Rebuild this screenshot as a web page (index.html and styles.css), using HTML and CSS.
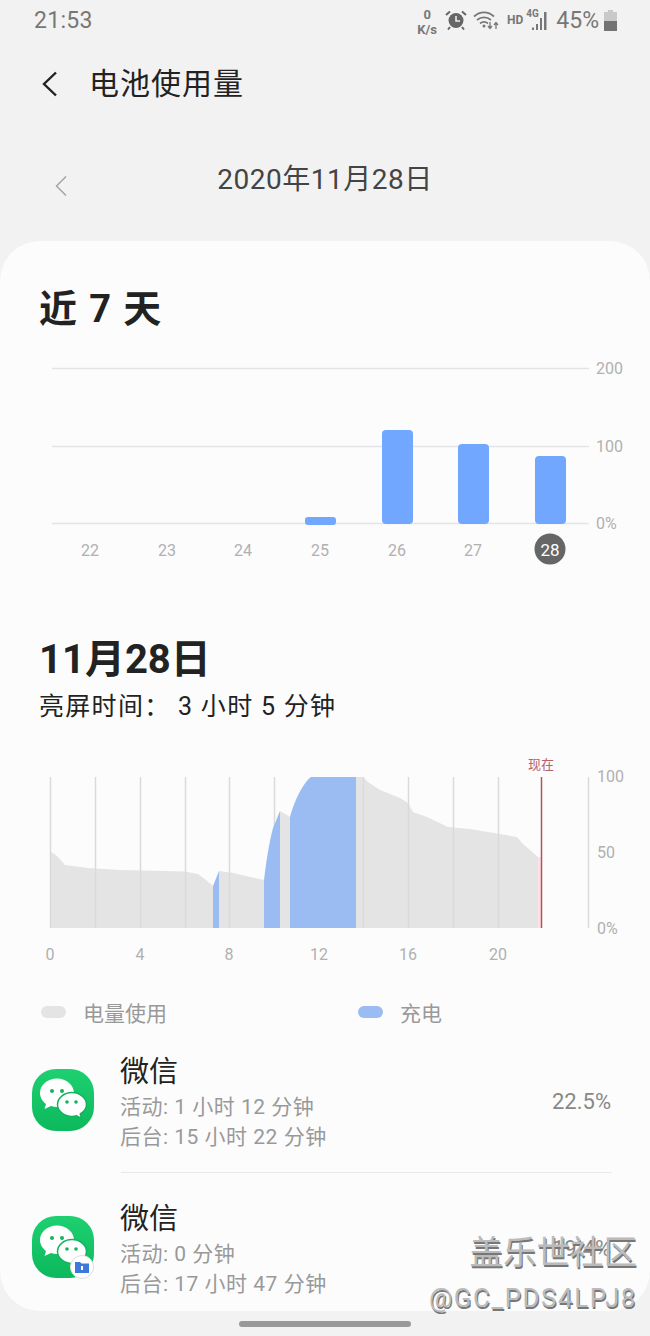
FILE: index.html
```html
<!DOCTYPE html>
<html lang="zh">
<head>
  <meta charset="UTF-8">
  <meta name="viewport" content="width=device-width, initial-scale=1.0">
  <title>电池使用量</title>
  <link rel="stylesheet" href="styles.css">
</head>
<body>
  <div class="phone">
    <!-- Status bar -->
    <div class="status-bar">
      <span class="clock">21:53</span>
      <div class="status-icons">
        <span class="speed"><b>0</b><b>K/s</b></span>
        <svg class="ic-alarm" width="24" height="20" viewBox="0 0 24 20">
          <circle cx="12" cy="10.5" r="7.5" fill="#666"/>
          <path d="M12 6v5h4" fill="none" stroke="#eee" stroke-width="1.6"/>
          <path d="M2 5l4-3.5M22 5l-4-3.5M6 17l-2 2.5M18 17l2 2.5" stroke="#666" stroke-width="2" fill="none"/>
        </svg>
        <svg class="ic-wifi" width="26" height="20" viewBox="0 0 26 20">
          <path d="M1 6.500c6-5.500 14-5.500 20 0M4 10c4-3.500 10-3.500 14 0M7 13.500c2.500-2 5.500-2 8 0" fill="none" stroke="#777" stroke-width="1.700"/>
          <circle cx="11" cy="16" r="1.500" fill="#777"/>
          <path d="M17 12v6M15 16l2 2.500 2-2.500M23 19v-6M21 15l2-2.500 2 2.500" fill="none" stroke="#777" stroke-width="1.300"/>
        </svg>
        <span class="hd">HD</span>
        <span class="net">
          <span class="net-label">4G</span>
          <svg width="18" height="22" viewBox="0 0 18 22">
            <path d="M3 18.500h2V21H3zM7 15h2v6H7zM11 9h2v12h-2zM15 3h2.500v18H15z" fill="#777"/>
          </svg>
        </span>
        <span class="battery-text">45%</span>
        <svg width="13" height="21" viewBox="0 0 13 21">
          <path d="M4 0h5v2h4v19H0V2h4z" fill="#c9c9c9"/>
          <path d="M0 11h13v10H0z" fill="#737373"/>
        </svg>
      </div>
    </div>

    <!-- Header -->
    <header class="app-bar">
      <svg class="back" width="18" height="26" viewBox="0 0 18 26">
        <path d="M15 1.500L3 13l12 11.500" fill="none" stroke="#222" stroke-width="2.400"/>
      </svg>
      <h1>电池使用量</h1>
    </header>

    <div class="date-bar">
      <svg class="prev" width="14" height="22" viewBox="0 0 14 22">
        <path d="M12 1.500L2.500 11 12 20.500" fill="none" stroke="#a5a5a5" stroke-width="1.500"/>
      </svg>
      <span>2020年11月28日</span>
    </div>

    <main class="card">
      <h2 class="week-title">近 7 天</h2>

      <!-- 7 day chart -->
      <svg class="chart-week" width="650" height="226" viewBox="0 0 650 226">
        <g class="grid">
          <path d="M52 8.500H589M52 86.500H589M52 163.500H589"/>
        </g>
        <g fill="#72a7ff">
          <rect x="305" y="157" width="31" height="8" rx="3"/>
          <rect x="382" y="70" width="31" height="94" rx="4"/>
          <rect x="458" y="84" width="31" height="80" rx="4"/>
          <rect x="535" y="96" width="31" height="68" rx="4"/>
        </g>
        <g class="axis-text">
          <text x="596" y="14">200</text>
          <text x="596" y="92">100</text>
          <text x="596" y="169">0%</text>
        </g>
        <g class="axis-text mid">
          <text x="90" y="196">22</text>
          <text x="167" y="196">23</text>
          <text x="243" y="196">24</text>
          <text x="320" y="196">25</text>
          <text x="397" y="196">26</text>
          <text x="473" y="196">27</text>
        </g>
        <circle cx="550" cy="189" r="15.500" fill="#666"/>
        <text class="today" x="550" y="196">28</text>
      </svg>

      <h2 class="day-title">11月28日</h2>
      <p class="screen-time">亮屏时间： 3 小时 5 分钟</p>

      <!-- Battery level chart -->
      <svg class="chart-day" width="650" height="222" viewBox="0 0 650 222">
        <path fill="#e4e4e4" d="M50 98L57 103 65 112 88 115 120 117 185 118.500 198 121 206 127 213 133V175H50Z"/>
        <path fill="#e4e4e4" d="M219 118L233 120 264 127V175H219Z"/>
        <path fill="#e4e4e4" d="M280 58L290 64V175H280Z"/>
        <path fill="#e4e4e4" d="M356 24H363L368 29 380 37 400 45 408 50 413 59 427 64 448 74 470 76 500 81 517 84 522 90 530 97 538 104V175H356Z"/>
        <rect x="538" y="104" width="3" height="71" fill="#fde3e3"/>
        <g class="grid-v">
          <path d="M50.500 24V175M95.500 24V175M140.500 24V175M185.500 24V175M229.500 24V175M274.500 24V175M319.500 24V175M363.500 24V175M408.500 24V175M453.500 24V175M498.500 24V175M588.500 24V175"/>
        </g>
        <path fill="#9abcf3" d="M213 133L219 118V175H213Z"/>
        <path fill="#9abcf3" d="M264 127C266 110 269 90 273 75L280 58V175H264Z"/>
        <path fill="#9abcf3" d="M290 64C292 56 297 43 302 35 305 30 308 26 311 24H356V175H290Z"/>
        <path d="M541.500 24V175" stroke="#b4505f" stroke-width="1.500"/>
        <text class="now" x="541" y="16">现在</text>
        <g class="axis-text">
          <text x="597" y="29">100</text>
          <text x="597" y="105">50</text>
          <text x="597" y="181">0%</text>
        </g>
        <g class="axis-text mid">
          <text x="50" y="207">0</text>
          <text x="140" y="207">4</text>
          <text x="229" y="207">8</text>
          <text x="319" y="207">12</text>
          <text x="408" y="207">16</text>
          <text x="498" y="207">20</text>
        </g>
      </svg>

      <div class="legend">
        <div class="legend-item"><i class="dot-grey"></i>电量使用</div>
        <div class="legend-item"><i class="dot-blue"></i>充电</div>
      </div>

      <!-- App list -->
      <div class="app-row">
        <div class="app-icon">
          <svg width="62" height="62" viewBox="0 0 62 62">
            <path d="M25 9.500C15.500 9.500 8 16 8 24c0 4.500 2.500 8.500 6 11l-1.500 5 6.500-3c2 .6 4 1 6 1 9.500 0 17-6.500 17-14S34.500 9.500 25 9.500z" fill="#fff"/>
            <circle cx="20" cy="22" r="2" fill="#12b45c"/>
            <circle cx="30" cy="22" r="2" fill="#12b45c"/>
            <path d="M40 23.500c-8 0-14.500 5.500-14.500 12S32 47.500 40 47.500c1.500 0 3-.2 4.500-.7l5 2.700-1.200-4.500c3.700-2.200 6.200-5.700 6.200-9.500 0-6.500-6.500-12-14.500-12z" fill="#fff" stroke="#12b45c" stroke-width="1.500"/>
            <circle cx="35" cy="33" r="1.800" fill="#12b45c"/>
            <circle cx="44" cy="33" r="1.800" fill="#12b45c"/>
          </svg>
        </div>
        <div class="app-info">
          <div class="app-name">微信</div>
          <div class="app-line">活动: 1 小时 12 分钟</div>
          <div class="app-line">后台: 15 小时 22 分钟</div>
        </div>
        <div class="app-pct">22.5%</div>
      </div>
      <div class="app-row second">
        <div class="app-icon">
          <svg width="62" height="62" viewBox="0 0 62 62">
            <path d="M25 9.500C15.500 9.500 8 16 8 24c0 4.500 2.500 8.500 6 11l-1.500 5 6.500-3c2 .6 4 1 6 1 9.500 0 17-6.500 17-14S34.500 9.500 25 9.500z" fill="#fff"/>
            <circle cx="20" cy="22" r="2" fill="#12b45c"/>
            <circle cx="30" cy="22" r="2" fill="#12b45c"/>
            <path d="M40 23.500c-8 0-14.500 5.500-14.500 12S32 47.500 40 47.500c1.500 0 3-.2 4.500-.7l5 2.700-1.200-4.500c3.700-2.200 6.200-5.700 6.200-9.500 0-6.500-6.500-12-14.500-12z" fill="#fff" stroke="#12b45c" stroke-width="1.500"/>
            <circle cx="35" cy="33" r="1.800" fill="#12b45c"/>
            <circle cx="44" cy="33" r="1.800" fill="#12b45c"/>
          </svg>
          <span class="work-badge">
            <svg width="14" height="12" viewBox="0 0 14 12">
              <path d="M0 1h5l1.500 1.500H14V12H0z" fill="#3d78dc"/>
              <rect x="6" y="5" width="2" height="4" fill="#fff"/>
            </svg>
          </span>
        </div>
        <div class="app-info">
          <div class="app-name">微信</div>
          <div class="app-line">活动: 0 分钟</div>
          <div class="app-line">后台: 17 小时 47 分钟</div>
        </div>
        <div class="app-pct">19.4%</div>
      </div>
    </main>

    <div class="home-bar"></div>

    <!-- Watermark -->
    <div class="watermark">
      <div class="wm-title">盖乐世社区</div>
      <div class="wm-user">@GC_PDS4LPJ8</div>
    </div>
  </div>
</body>
</html>
```

FILE: styles.css
```css
/* Global */
* {
  box-sizing: border-box;
}

body {
  margin: 0;
  background-color: #f2f2f2;
  font-family: Roboto, "Noto Sans CJK SC", sans-serif;
}

.phone {
  position: relative;
  width: 650px;
  height: 1336px;
  overflow: hidden;
  display: flex;
  flex-direction: column;
}

/* Status bar */
.status-bar {
  height: 40px;
  padding: 0 33px 0 34px;
  display: flex;
  align-items: center;
  justify-content: space-between;
  color: #777;
}

.clock {
  font-size: 23px;
  letter-spacing: 0.3px;
}

.status-icons {
  display: flex;
  align-items: center;
}

.speed {
  display: flex;
  flex-direction: column;
  align-items: center;
  font-size: 13px;
  line-height: 15px;
  margin-right: 7px;
  margin-top: 4px;
}

.ic-alarm {
  margin-right: 5px;
}

.ic-wifi {
  margin-right: 8px;
}

.hd {
  font-size: 12px;
  font-weight: 700;
  margin-right: 6px;
}

.net {
  position: relative;
  display: flex;
  margin-right: 9px;
}

.net-label {
  position: absolute;
  left: -3px;
  top: -1px;
  font-size: 10px;
  font-weight: 700;
}

.battery-text {
  font-size: 23px;
  margin-right: 5px;
}

/* Header */
.app-bar {
  height: 88px;
  padding: 0 0 0 41px;
  display: flex;
  align-items: center;
}

.app-bar .back {
  margin-right: 30px;
}

.app-bar h1 {
  margin: 0;
  font-size: 30px;
  font-weight: 400;
  line-height: 40px;
  color: #222;
  letter-spacing: 1px;
}

.date-bar {
  position: relative;
  height: 113px;
  padding-bottom: 16px;
  display: flex;
  align-items: center;
  justify-content: center;
  font-size: 28px;
  letter-spacing: 0.5px;
  color: #444;
}

.date-bar .prev {
  position: absolute;
  left: 54px;
  top: 47px;
}

/* Main card */
.card {
  flex: none;
  height: 1070px;
  background-color: #fcfcfc;
  border-radius: 40px;
  overflow: hidden;
}

.week-title {
  margin: 40px 0 0 39px;
  height: 56px;
  font-size: 38px;
  line-height: 56px;
  font-weight: 700;
  letter-spacing: 1.4px;
  color: #222;
}

.chart-week {
  display: block;
  margin-top: 23px;
}

.chart-day {
  display: block;
  margin-top: 27px;
}

.grid path {
  stroke: #e4e4e8;
  stroke-width: 1.500;
  fill: none;
}

.grid-v path {
  stroke: #dadada;
  stroke-width: 1.500;
  fill: none;
}

.axis-text text {
  font-size: 16px;
  fill: #b0b0b0;
}

.axis-text.mid text,
.today,
.now {
  text-anchor: middle;
}

.today {
  font-size: 17px;
  fill: #fff;
}

.now {
  font-size: 13px;
  fill: #b5606f;
}

.day-title {
  margin: 48px 0 0 39px;
  height: 52px;
  font-size: 40px;
  line-height: 52px;
  font-weight: 700;
  color: #222;
}

.screen-time {
  margin: 2px 0 0 39px;
  height: 38px;
  font-size: 25px;
  line-height: 38px;
  letter-spacing: 1.300px;
  color: #222;
}

/* Legend */
.legend {
  margin-top: 22px;
  height: 30px;
  padding-left: 41px;
  display: flex;
  align-items: center;
  font-size: 21px;
  color: #999;
}

.legend-item {
  flex: none;
  width: 317px;
  display: flex;
  align-items: center;
}

.legend-item i {
  width: 25px;
  height: 12px;
  margin-right: 17px;
  border-radius: 6px;
}

.dot-grey {
  background-color: #e4e4e4;
}

.dot-blue {
  background-color: #9abcf3;
}

/* App rows */
.app-row {
  position: relative;
  display: flex;
  align-items: flex-start;
  margin: 24px 38px 0 32px;
  height: 122px;
}

.app-row.second {
  margin-top: 25px;
  height: 110px;
}

.app-row:not(.second)::after {
  content: "";
  position: absolute;
  left: 89px;
  right: 0;
  bottom: 0;
  border-bottom: 1.500px solid #e8e8e8;
}

.app-icon {
  position: relative;
  flex: none;
  width: 62px;
  height: 62px;
  margin-top: 18px;
  border-radius: 24px;
  background: linear-gradient(#1ed071, #0cb95c);
}

.app-icon > svg {
  display: block;
}

.work-badge {
  position: absolute;
  right: 0;
  bottom: -1px;
  width: 24px;
  height: 24px;
  border-radius: 50%;
  background-color: #fff;
  border: 1px solid #ddd;
  display: flex;
  align-items: center;
  justify-content: center;
}

.app-info {
  flex: 1;
  margin-left: 26px;
}

.app-name {
  height: 41px;
  font-size: 29px;
  line-height: 42px;
  color: #222;
}

.app-line {
  height: 30px;
  font-size: 21px;
  line-height: 30px;
  color: #999;
  letter-spacing: 0.5px;
}

.app-pct {
  margin-top: 36px;
  padding-right: 1px;
  font-size: 22px;
  line-height: 30px;
  color: #888;
}

/* Home indicator */
.home-bar {
  width: 172px;
  height: 6px;
  margin: 10px auto 0;
  border-radius: 3px;
  background-color: #999;
}

/* Watermark */
.watermark {
  position: absolute;
  right: 13px;
  top: 1232px;
  text-align: right;
  color: #bbb;
  text-shadow: 1px 2px 0 #777;
}

.wm-title {
  height: 42px;
  font-size: 33.500px;
  line-height: 42px;
}

.wm-user {
  height: 42px;
  font-size: 26px;
  line-height: 48px;
  letter-spacing: 1.500px;
}
```
